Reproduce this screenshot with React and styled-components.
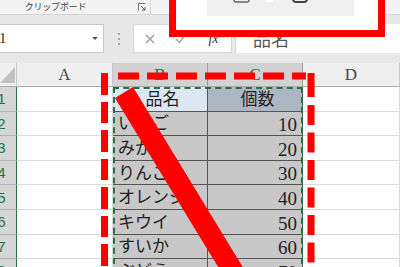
import React from 'react';
import styled, { createGlobalStyle } from 'styled-components';

const GlobalStyle = createGlobalStyle`
  html, body { margin: 0; padding: 0; background: #e8e8e8; overflow: hidden; }
  #root { width: 400px; height: 267px; }
`;

const Page = styled.div`
  position: relative;
  width: 400px;
  height: 267px;
  overflow: hidden;
  background: #e8e8e8;
  font-family: "Noto Sans CJK JP", sans-serif;
`;

const Ribbon = styled.div`
  height: 15px;
  box-sizing: border-box;
  background: #f3f3f3;
  border-bottom: 1px solid #d6d6d6;
  display: flex;
`;

const Group = styled.div`
  margin-left: -27px;
  width: 178px;
  height: 14px;
  box-sizing: border-box;
  display: flex;
  align-items: flex-start;
  border-right: 1px solid #d8d8d8;
`;

const GroupLabel = styled.div`
  flex: 1;
  text-align: center;
  font-size: 9px;
  line-height: 11px;
  color: #444;
  padding-top: 1px;
  letter-spacing: -0.2px;
`;

const Launcher = styled.svg`
  width: 8px;
  height: 8px;
  margin: 3px 4px 0 0;
`;

const FormulaBar = styled.div`
  height: 48px;
  box-sizing: border-box;
  padding-top: 9px;
  display: flex;
  align-items: flex-start;
`;

const NameBox = styled.div`
  margin-left: -20px;
  width: 124px;
  height: 29px;
  box-sizing: border-box;
  background: #fff;
  border: 1px solid #c6c6c6;
  display: flex;
  align-items: center;
  padding-left: 8px;
  font-family: "Liberation Serif", serif;
  font-size: 15px;
  color: #333;
`;

const Caret = styled.span`
  margin-left: auto;
  margin-right: 5px;
  width: 0;
  height: 0;
  border-left: 3px solid transparent;
  border-right: 3px solid transparent;
  border-top: 3px solid #555;
`;

const Grip = styled.div`
  width: 29px;
  height: 29px;
  display: flex;
  flex-direction: column;
  align-items: center;
  justify-content: center;
  gap: 3px;
`;

const Dot = styled.span`
  width: 2px;
  height: 2px;
  background: #a8a8a8;
`;

const FuncBox = styled.div`
  width: 99px;
  height: 29px;
  box-sizing: border-box;
  background: #fff;
  border: 1px solid #d6d6d6;
  display: flex;
  align-items: center;
`;

const Slot = styled.div`
  width: ${p => p.$w}px;
  height: 100%;
  display: flex;
  align-items: center;
  justify-content: center;
  color: #333;
`;

const Fx = styled.span`
  font-family: "Liberation Serif", serif;
  font-style: italic;
  font-size: 14px;
  margin-top: 0px;
`;

const FormulaInput = styled.div`
  flex: 1;
  margin-left: 3px;
  height: 29px;
  box-sizing: border-box;
  background: #fff;
  border-left: 1px solid #d6d6d6;
  padding: 4px 0 0 17px;
  font-size: 18px;
  line-height: 20px;
  color: #555;
`;

const Sheet = styled.div`
  margin-left: -13px;
  display: grid;
  grid-template-columns: 30px 96px 95px 95px 97px;
  grid-template-rows: 24px repeat(8, 24.6px);
`;

const placed = p => `grid-column: ${p.$c}; grid-row: ${p.$r};`;

const Corner = styled.div`
  ${placed}
  background: #efefef;
  border-right: 1px solid #c6c6c6;
  border-bottom: 1px solid #ababab;
  box-sizing: border-box;
  display: flex;
  align-items: flex-end;
  justify-content: flex-end;
  padding: 0 1px 3px 0;
`;

const ColHead = styled.div`
  ${placed}
  box-sizing: border-box;
  background: ${p => (p.$sel ? '#d2d2d2' : '#efefef')};
  color: ${p => (p.$sel ? '#217346' : '#444')};
  border-right: 1px solid ${p => (p.$sel ? '#9e9e9e' : '#c6c6c6')};
  border-bottom: 1px solid #ababab;
  display: flex;
  align-items: center;
  justify-content: center;
  font-family: "Liberation Serif", serif;
  font-size: 17px;
  padding-top: 1px;
`;

const RowHead = styled.div`
  ${placed}
  box-sizing: border-box;
  background: #d6d6d6;
  color: #217346;
  border-right: 1px solid #217346;
  border-bottom: 1px solid #b5b5b5;
  display: flex;
  align-items: center;
  justify-content: center;
  font-family: "Liberation Sans", sans-serif;
  font-size: 15px;
`;

const tones = {
  plain: { bg: '#ffffff', line: '#dadada' },
  key: { bg: '#dde7f3', line: '#555' },
  title: { bg: '#adb7c4', line: '#555' },
  data: { bg: '#c8c8c8', line: '#555' },
};

const Cell = styled.div`
  ${placed}
  box-sizing: border-box;
  background: ${p => tones[p.$tone].bg};
  border-right: 1px solid ${p => tones[p.$tone].line};
  border-bottom: 1px solid ${p => tones[p.$tone].line};
  display: flex;
  align-items: ${p => (p.$num ? 'flex-end' : 'center')};
  justify-content: ${p => p.$justify || 'flex-start'};
  padding: ${p => (p.$num ? '0 5px 0 0' : '0 0 2px 5px')};
  font-family: ${p => (p.$num ? '"Liberation Serif", serif' : '"Noto Sans CJK JP", sans-serif')};
  font-size: ${p => (p.$num ? '19px' : '17px')};
  line-height: ${p => (p.$num ? '21px' : '22px')};
  color: #222;
  white-space: nowrap;
  overflow: hidden;
`;

const Ants = styled.div`
  grid-column: 3 / 5;
  grid-row: 2 / span 8;
  border: 2px dashed #217346;
  box-sizing: border-box;
  pointer-events: none;
`;

const Overlay = styled.svg`
  position: absolute;
  left: 0;
  top: 0;
  pointer-events: none;
`;

const rows = [
  ['品名', '個数'],
  ['いちご', '10'],
  ['みかん', '20'],
  ['りんご', '30'],
  ['オレンジ', '40'],
  ['キウイ', '50'],
  ['すいか', '60'],
  ['ぶどう', '70'],
];

export default function App() {
  const red = '#ff0000';
  const dx = 0.61;
  return (
    <Page>
      <GlobalStyle />
      <Ribbon>
        <Group>
          <GroupLabel>クリップボード</GroupLabel>
          <Launcher viewBox="0 0 8 8">
            <path d="M0.5 7.5V0.5H7.5" fill="none" stroke="#777" strokeWidth="1" />
            <path d="M3 3L7 7M7 4V7H4" fill="none" stroke="#555" strokeWidth="1" />
          </Launcher>
        </Group>
      </Ribbon>
      <FormulaBar>
        <NameBox>
          B1
          <Caret />
        </NameBox>
        <Grip>
          <Dot />
          <Dot />
          <Dot />
        </Grip>
        <FuncBox>
          <Slot $w={31}>
            <svg width="10" height="10" viewBox="0 0 10 10">
              <path d="M1 1L9 9M9 1L1 9" stroke="#9a9a9a" strokeWidth="1.3" />
            </svg>
          </Slot>
          <Slot $w={31}>
            <svg width="11" height="10" viewBox="0 0 11 10">
              <path d="M1 5L4.5 8.5L10 1" fill="none" stroke="#a0a0a0" strokeWidth="1.3" />
            </svg>
          </Slot>
          <Slot $w={35}>
            <Fx>fx</Fx>
          </Slot>
        </FuncBox>
        <FormulaInput>品名</FormulaInput>
      </FormulaBar>
      <Sheet>
        <Corner $c={1} $r={1}>
          <svg width="15" height="16" viewBox="0 0 15 16">
            <path d="M15 0V16H0Z" fill="#c2c2c2" />
          </svg>
        </Corner>
        <ColHead $c={2} $r={1}>A</ColHead>
        <ColHead $c={3} $r={1} $sel>B</ColHead>
        <ColHead $c={4} $r={1} $sel>C</ColHead>
        <ColHead $c={5} $r={1}>D</ColHead>
        {rows.map(([name, val], i) => (
          <React.Fragment key={i}>
            <RowHead $c={1} $r={i + 2}>{i + 1}</RowHead>
            <Cell $c={2} $r={i + 2} $tone="plain" />
            <Cell
              $c={3}
              $r={i + 2}
              $tone={i === 0 ? 'key' : 'data'}
              $justify={i === 0 ? 'center' : 'flex-start'}
            >
              {name}
            </Cell>
            <Cell
              $c={4}
              $r={i + 2}
              $tone={i === 0 ? 'title' : 'data'}
              $justify={i === 0 ? 'center' : 'flex-end'}
              $num={i !== 0}
            >
              {val}
            </Cell>
            <Cell $c={5} $r={i + 2} $tone="plain" />
          </React.Fragment>
        ))}
        <Ants />
      </Sheet>
      <Overlay width="400" height="267" viewBox="0 0 400 267">
        <rect x="172.5" y="-20" width="209" height="53.5" fill="#fff" stroke={red} strokeWidth="7" />
        <rect x="207" y="0" width="147" height="16" fill="#f0f0f0" />
        <rect x="234" y="-8" width="15" height="10" rx="2" fill="none" stroke="#666" strokeWidth="1.5" />
        <rect x="266" y="-6" width="7" height="8" fill="#fff" />
        <rect x="293" y="-8" width="14" height="10" rx="3" fill="none" stroke="#444" strokeWidth="2" />
        <line x1="104.5" y1="73" x2="104.5" y2="275" stroke={red} strokeWidth="7" strokeDasharray="22 7 21 7" />
        <line x1="118" y1="76" x2="306" y2="76" stroke={red} strokeWidth="7" strokeDasharray="21 8" />
        <line
          x1="311"
          y1="73"
          x2="311"
          y2="275"
          stroke={red}
          strokeWidth="7"
          strokeDasharray="24 8 20 7.5 20 7.5 20 7.5 20 7.5 20 7.5 20 7.5 20 7.5"
        />
        <line
          x1="124"
          y1="92.5"
          x2={124 + dx * 210}
          y2={302.5}
          stroke={red}
          strokeWidth="21"
        />
      </Overlay>
    </Page>
  );
}
